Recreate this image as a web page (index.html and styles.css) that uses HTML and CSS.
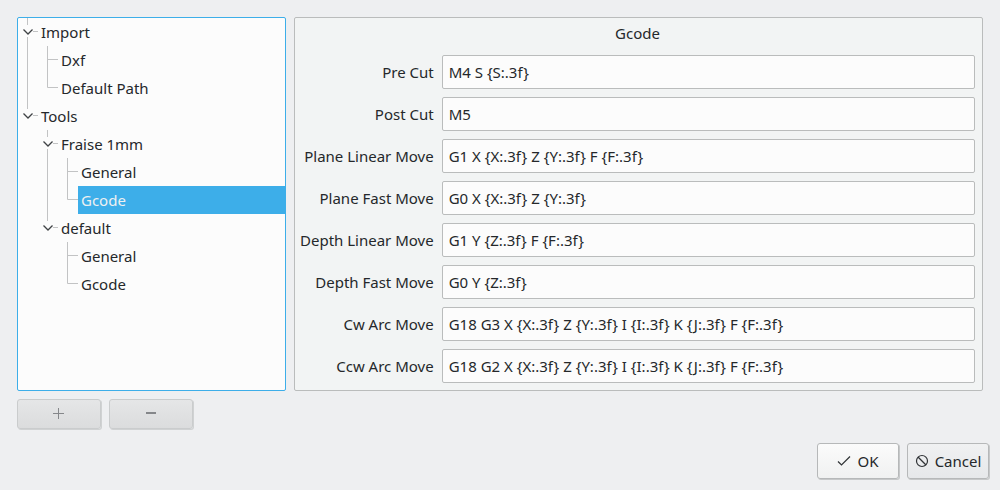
FILE: index.html
```html
<!DOCTYPE html>
<html lang="en">
<head>
<meta charset="utf-8">
<meta name="viewport" content="width=device-width, initial-scale=1">
<title>Tool settings</title>
<link rel="stylesheet" href="styles.css">
</head>
<body>
<svg class="symbols" aria-hidden="true">
  <symbol id="line" viewBox="0 0 20 28"><path class="branch" d="M9.5 0V28"/></symbol>
  <symbol id="tee" viewBox="0 0 20 28"><path class="branch" d="M9.5 0V28M10 13.5H20"/></symbol>
  <symbol id="elbow" viewBox="0 0 20 28"><path class="branch" d="M9.5 0V13.5H20"/></symbol>
  <symbol id="open" viewBox="0 0 20 28"><path class="branch" d="M9.5 0V7M9.5 19V28M15 13.5H20"/><path class="chevron" d="M5.5 11.5L10 16L14.5 11.5"/></symbol>
  <symbol id="open-last" viewBox="0 0 20 28"><path class="branch" d="M9.5 0V7M15 13.5H20"/><path class="chevron" d="M5.5 11.5L10 16L14.5 11.5"/></symbol>
</svg>
<form class="dialog">
  <div class="workspace">
    <div class="sidebar">
      <ul class="tree" role="tree" aria-label="Settings">
        <li class="row" role="treeitem" aria-level="1" aria-expanded="true"><button type="button" class="toggle" aria-label="Collapse Import"><svg class="cell"><use href="#open"/></svg></button><span class="name">Import</span></li>
        <li class="row" role="treeitem" aria-level="2"><svg class="cell"><use href="#line"/></svg><svg class="cell"><use href="#tee"/></svg><span class="name">Dxf</span></li>
        <li class="row" role="treeitem" aria-level="2"><svg class="cell"><use href="#line"/></svg><svg class="cell"><use href="#elbow"/></svg><span class="name">Default Path</span></li>
        <li class="row" role="treeitem" aria-level="1" aria-expanded="true"><button type="button" class="toggle" aria-label="Collapse Tools"><svg class="cell"><use href="#open-last"/></svg></button><span class="name">Tools</span></li>
        <li class="row" role="treeitem" aria-level="2" aria-expanded="true"><span class="cell"></span><button type="button" class="toggle" aria-label="Collapse Fraise 1mm"><svg class="cell"><use href="#open"/></svg></button><span class="name">Fraise 1mm</span></li>
        <li class="row" role="treeitem" aria-level="3"><span class="cell"></span><svg class="cell"><use href="#line"/></svg><svg class="cell"><use href="#tee"/></svg><span class="name">General</span></li>
        <li class="row" role="treeitem" aria-level="3" aria-selected="true"><span class="cell"></span><svg class="cell"><use href="#line"/></svg><svg class="cell"><use href="#elbow"/></svg><span class="name selected">Gcode</span></li>
        <li class="row" role="treeitem" aria-level="2" aria-expanded="true"><span class="cell"></span><button type="button" class="toggle" aria-label="Collapse default"><svg class="cell"><use href="#open-last"/></svg></button><span class="name">default</span></li>
        <li class="row" role="treeitem" aria-level="3"><span class="cell"></span><span class="cell"></span><svg class="cell"><use href="#tee"/></svg><span class="name">General</span></li>
        <li class="row" role="treeitem" aria-level="3"><span class="cell"></span><span class="cell"></span><svg class="cell"><use href="#elbow"/></svg><span class="name">Gcode</span></li>
      </ul>
      <div class="edit-actions">
        <button type="button" class="button" disabled aria-label="Add tool"><svg width="12" height="12" viewBox="0 0 12 12"><path class="sign" d="M5.5 0V11M0 5.5H11"/></svg></button>
        <button type="button" class="button" disabled aria-label="Remove tool"><svg width="12" height="12" viewBox="0 0 12 12"><path class="sign minus" d="M1 5H11"/></svg></button>
      </div>
    </div>
    <section class="panel" aria-labelledby="panel-title">
      <h1 class="title" id="panel-title">Gcode</h1>
      <div class="fields">
        <label for="pre">Pre Cut</label><input class="field" id="pre" type="text" value="M4 S {S:.3f}">
        <label for="post">Post Cut</label><input class="field" id="post" type="text" value="M5">
        <label for="plane-linear">Plane Linear Move</label><input class="field" id="plane-linear" type="text" value="G1 X {X:.3f} Z {Y:.3f} F {F:.3f}">
        <label for="plane-fast">Plane Fast Move</label><input class="field" id="plane-fast" type="text" value="G0 X {X:.3f} Z {Y:.3f}">
        <label for="depth-linear">Depth Linear Move</label><input class="field" id="depth-linear" type="text" value="G1 Y {Z:.3f} F {F:.3f}">
        <label for="depth-fast">Depth Fast Move</label><input class="field" id="depth-fast" type="text" value="G0 Y {Z:.3f}">
        <label for="cw">Cw Arc Move</label><input class="field" id="cw" type="text" value="G18 G3 X {X:.3f} Z {Y:.3f} I {I:.3f} K {J:.3f} F {F:.3f}">
        <label for="ccw">Ccw Arc Move</label><input class="field" id="ccw" type="text" value="G18 G2 X {X:.3f} Z {Y:.3f} I {I:.3f} K {J:.3f} F {F:.3f}">
      </div>
    </section>
  </div>
  <div class="dialog-actions">
    <button type="submit" class="button ok"><svg width="14" height="14" viewBox="0 0 14 14" aria-hidden="true"><path class="glyph" d="M1 7.5L4.5 11L13 2.5"/></svg>OK</button>
    <button type="button" class="button"><svg width="14" height="14" viewBox="0 0 14 14" aria-hidden="true"><circle class="glyph" cx="7" cy="7" r="5.5"/><path class="glyph" d="M3 3L11 11"/></svg>Cancel</button>
  </div>
</form>
</body>
</html>
```

FILE: styles.css
```css
* {
  box-sizing: border-box;
}

body {
  margin: 0;
  background: #eeeff1;
  color: #25282b;
  font: 15px/20px "Noto Sans", sans-serif;
}

button,
input {
  font: inherit;
  color: inherit;
}

svg {
  display: block;
  flex: none;
}

.symbols {
  position: absolute;
  width: 0;
  height: 0;
}

.dialog {
  display: flex;
  flex-direction: column;
  gap: 14px;
  min-height: 100vh;
  padding: 17px 11px 11px 17px;
}

.workspace {
  display: grid;
  grid-template-columns: minmax(180px, 269px) minmax(0, 1fr);
  gap: 8px;
  flex: 1;
  padding-right: 6px;
}

.sidebar {
  display: flex;
  flex-direction: column;
  gap: 8px;
}

.tree {
  flex: 1;
  margin: 0;
  padding: 0;
  list-style: none;
  background: #fcfcfc;
  border: 1px solid #3daee9;
  border-radius: 2px;
}

.row {
  display: flex;
}

.cell {
  width: 20px;
  height: 28px;
  flex: none;
}

.toggle {
  padding: 0;
  border: 0;
  background: none;
}

.name {
  flex: 1;
  padding: 4px 3px;
}

.selected {
  background: #3daee9;
  color: #eff0f1;
}

.branch {
  fill: none;
  stroke: #c2c3c4;
}

.chevron {
  fill: none;
  stroke: #3f4245;
  stroke-width: 1.3;
}

.panel {
  align-self: start;
  padding: 5px 7px 7px 5px;
  background: #f2f4f4;
  border: 1px solid #babcbc;
  border-radius: 2px;
}

.title {
  margin: 0 0 12px;
  font-size: 15px;
  font-weight: 400;
  text-align: center;
}

.fields {
  display: grid;
  grid-template-columns: auto minmax(0, 1fr);
  gap: 8px;
  align-items: center;
  text-align: right;
}

.field {
  width: 100%;
  height: 34px;
  padding: 0 6px;
  background: #fcfcfc;
  border: 1px solid #babcbc;
  border-radius: 2px;
}

.edit-actions,
.dialog-actions {
  display: flex;
  gap: 8px;
}

.dialog-actions {
  justify-content: flex-end;
}

.button {
  display: flex;
  align-items: center;
  justify-content: center;
  gap: 6px;
  min-width: 82px;
  height: 36px;
  padding: 0 6px;
  background: linear-gradient(#f0f1f2, #e6e8ea);
  border: 1px solid #b6b8b9;
  border-radius: 3px;
  box-shadow: 1px 1px 0 #c6c8c9;
}

.ok {
  background: linear-gradient(#fbfbfb, #f0f1f1);
}

.button:disabled {
  width: 84px;
  height: 30px;
  background: linear-gradient(#e5e6e7, #dbdcdd);
  border-color: #cacccd;
  box-shadow: 1px 1px 0 #d0d2d3;
}

.glyph {
  fill: none;
  stroke: #303336;
  stroke-width: 1.2;
}

.sign {
  stroke: #85878a;
}

.minus {
  stroke-width: 2;
}
```
